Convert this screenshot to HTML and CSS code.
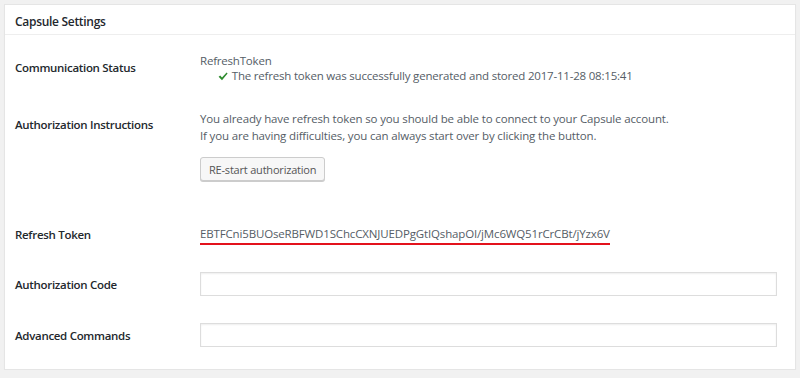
FILE: index.html
```html
<!DOCTYPE html>
<html lang="en">

<head>
    <meta charset="UTF-8">
    <meta name="viewport" content="width=device-width, initial-scale=1.0">
    <title>Capsule Settings</title>
    <link rel="stylesheet" href="styles.css">
</head>

<body>
    <div class="postbox">
        <h2 class="hndle">Capsule Settings</h2>
        <div class="inside">
            <div class="row row-status">
                <div class="label">Communication Status</div>
                <div class="value status">
                    <div>RefreshToken</div>
                    <div class="status-ok">
                        <svg class="check" width="10" height="9" viewBox="0 0 10 9">
                            <path d="M0.6 4.8 L2.2 3.4 L4 5.4 L8.6 0.4 L9.6 1.4 L4 8.2 Z" fill="#2e8b2e" />
                        </svg>
                        The refresh token was successfully generated and stored 2017-11-28 08:15:41
                    </div>
                </div>
            </div>
            <div class="row row-instructions">
                <div class="label">Authorization Instructions</div>
                <div class="value instructions">
                    <p>You already have refresh token so you should be able to connect to your Capsule account.</p>
                    <p>If you are having difficulties, you can always start over by clicking the button.</p>
                    <button class="btn">RE-start authorization</button>
                </div>
            </div>
            <div class="row row-token">
                <div class="label">Refresh Token</div>
                <div class="value token">
                    <span class="marked">EBTFCni5BUOseRBFWD1SChcCXNJUEDPgGtIQshapOI/jMc6WQ51rCrCBt/jYzx6V</span>
                </div>
            </div>
            <div class="row row-code">
                <div class="label">Authorization Code</div>
                <div class="value">
                    <input class="text-input" type="text">
                </div>
            </div>
            <div class="row row-commands">
                <div class="label">Advanced Commands</div>
                <div class="value">
                    <input class="text-input" type="text">
                </div>
            </div>
        </div>
    </div>
</body>

</html>
```

FILE: styles.css
```css
*,
html,
body {
    margin: 0;
    padding: 0;
    box-sizing: border-box;
}

body {
    background-color: #f1f1f1;
    padding: 4px 4px 0 4px;
    font-family: "Open Sans", "Noto Sans", sans-serif;
    font-size: 11.5px;
    letter-spacing: -0.15px;
    color: #555d66;
}

.postbox {
    background-color: #fff;
    border: 1px solid #e5e5e5;
    box-shadow: 0 1px 1px rgba(0, 0, 0, 0.04);
    height: 366px;
}

.hndle {
    font-size: 12px;
    font-weight: 600;
    letter-spacing: -0.3px;
    color: #23282d;
    line-height: 17px;
    padding: 8px 10px 4px 10px;
    height: 30px;
    border-bottom: 1px solid #eee;
}

.inside {
    padding: 0 18px 0 10px;
}

.row {
    display: flex;
    align-items: flex-start;
}

.label {
    width: 185px;
    flex-shrink: 0;
    font-weight: 600;
    font-size: 11.5px;
    letter-spacing: -0.3px;
    color: #23282d;
    line-height: 17px;
}

.value {
    flex: 1;
    line-height: 17px;
}

.row-status {
    height: 65px;
}

.row-status .label {
    padding-top: 24px;
}

.status {
    padding-top: 18px;
    line-height: 15px;
    letter-spacing: -0.2px;
}

.status-ok {
    padding-left: 18px;
}

.check {
    vertical-align: -1px;
    margin-right: 1px;
}

.row-instructions {
    height: 105px;
}

.row-instructions .label {
    padding-top: 16px;
}

.instructions {
    padding-top: 10px;
}

.btn {
    margin-top: 13px;
    height: 24px;
    padding: 0 8px;
    font-family: inherit;
    font-size: 11px;
    letter-spacing: -0.2px;
    color: #555;
    background-color: #f7f7f7;
    border: 1px solid #ccc;
    border-radius: 3px;
    box-shadow: 0 1px 0 #ccc;
    cursor: pointer;
}

.row-token {
    height: 55px;
}

.row-token .label {
    padding-top: 21px;
}

.token {
    padding-top: 20px;
}

.marked {
    display: inline-block;
    line-height: 17px;
    padding-bottom: 1px;
    border-bottom: 2px solid #e3121c;
}

.row-code,
.row-commands {
    height: 50px;
}

.row-code .label {
    padding-top: 16px;
}

.row-code .value {
    padding-top: 12px;
}

.row-commands .label {
    padding-top: 17px;
}

.row-commands .value {
    padding-top: 13px;
}

.text-input {
    display: block;
    width: 100%;
    height: 24px;
    border: 1px solid #ddd;
    box-shadow: inset 0 1px 2px rgba(0, 0, 0, 0.07);
    background-color: #fff;
    font-family: inherit;
    font-size: 12px;
    padding: 0 6px;
}
```
